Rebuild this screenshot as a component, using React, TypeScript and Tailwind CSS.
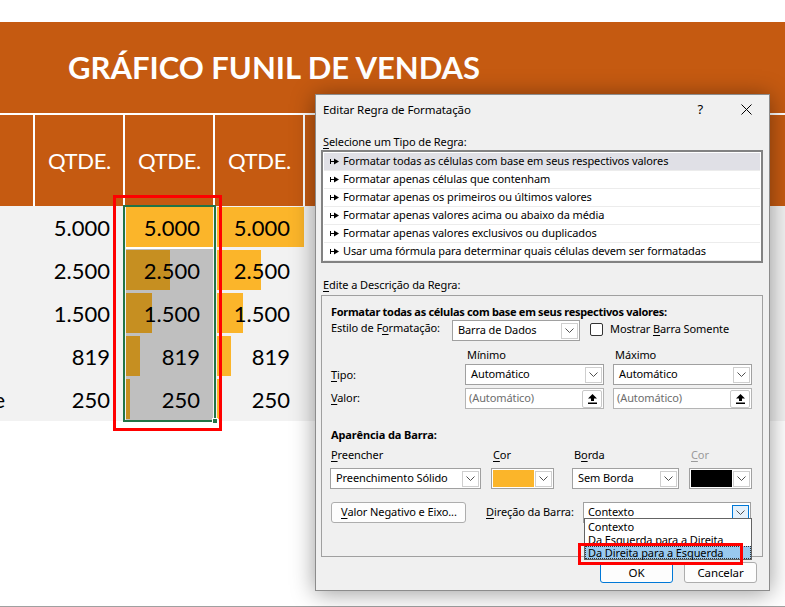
import React from "react";

const rules = [
  "Formatar todas as células com base em seus respectivos valores",
  "Formatar apenas células que contenham",
  "Formatar apenas os primeiros ou últimos valores",
  "Formatar apenas valores acima ou abaixo da média",
  "Formatar apenas valores exclusivos ou duplicados",
  "Usar uma fórmula para determinar quais células devem ser formatadas",
];

const values = [5000, 2500, 1500, 819, 250];
const fmt = (n: number) =>
  n >= 1000 ? `${Math.floor(n / 1000)}.${String(n % 1000).padStart(3, "0")}` : String(n);
const barW = (n: number) => (n / 5000) * 87;

const U = ({ c }: { c: string }) => <span className="underline underline-offset-2">{c}</span>;

function Chevron({ blue }: { blue?: boolean }) {
  return (
    <span
      className={`flex h-[16px] w-[17px] shrink-0 items-center justify-center border ${
        blue ? "border-[#0078d7] bg-[#e5f1fb]" : "border-[#cfcfcf] bg-white"
      }`}
    >
      <svg width="9" height="5" viewBox="0 0 9 5">
        <path d="M0.5 0.5 L4.5 4.5 L8.5 0.5" fill="none" stroke="#505050" strokeWidth="1" />
      </svg>
    </span>
  );
}

function Select({ value, className }: { value: string; className: string }) {
  return (
    <div className={`flex h-[21px] items-center justify-between border border-[#a0a0a0] bg-white pl-[5px] pr-[1px] ${className}`}>
      <span>{value}</span>
      <Chevron />
    </div>
  );
}

function ValueInput() {
  return (
    <div className="flex h-[21px] w-[139px] items-center justify-between border border-[#b4b4b4] bg-white pl-[3px] pr-[1px] text-[#6d6d6d]">
      <span>(Automático)</span>
      <span className="flex h-[18px] w-[20px] items-center justify-center rounded-[2px] border border-[#c8c8c8] bg-white">
        <svg width="9" height="10" viewBox="0 0 9 10">
          <polygon points="4.5,0 9,4.5 6,4.5 6,7 3,7 3,4.5 0,4.5" fill="#000" />
          <rect x="0" y="8.5" width="9" height="1.5" fill="#000" />
        </svg>
      </span>
    </div>
  );
}

function ColorPick({ color }: { color: string }) {
  return (
    <div className="flex h-[21px] w-[63px] items-center border border-[#a0a0a0] bg-white p-[1px]">
      <span className={`h-[17px] w-[42px] ${color}`} />
      <span className="ml-[1px]">
        <Chevron />
      </span>
    </div>
  );
}

function Arrow() {
  return (
    <svg width="9" height="7" viewBox="0 0 9 7" className="mr-[4px] shrink-0">
      <rect x="0" y="1" width="1" height="5" fill="#000" />
      <rect x="0" y="3" width="5" height="1" fill="#000" />
      <polygon points="4,0.5 9,3.5 4,6.5" fill="#000" />
    </svg>
  );
}

function Dialog() {
  return (
    <div className="absolute left-[315px] top-[94px] flex h-[497px] w-[455px] flex-col border border-[#8c8c8c] bg-[#f0f0f0] font-['Noto_Sans',sans-serif] text-[11px] tracking-[-0.1px] text-black shadow-[0_2px_22px_rgba(0,0,0,0.4)]">
      <div className="flex h-[29px] items-center pl-[7px] text-[11.5px]">
        <span className="flex-1">Editar Regra de Formatação</span>
        <span className="mr-[38px] text-[13px]">?</span>
        <svg width="11" height="11" viewBox="0 0 11 11" className="mr-[17px]">
          <path d="M0.5 0.5 L10.5 10.5 M10.5 0.5 L0.5 10.5" stroke="#000" strokeWidth="1" />
        </svg>
      </div>
      <div className="relative flex flex-col px-[5px]">
        <div className="mt-[10px] h-[16px] leading-[16px] pl-[2px]">
          <U c="S" />elecione um Tipo de Regra:
        </div>
        <div className="h-[113px] w-[442px] border-2 border-[#828282] bg-white p-[1px]">
          {rules.map((r, i) => (
            <div
              key={r}
              className={`flex h-[18px] items-center border-b border-[#ececec] pl-[6px] ${i === 0 ? "bg-[#e0e0e6]" : ""}`}
            >
              <Arrow />
              <span>{r}</span>
            </div>
          ))}
        </div>
        <div className="mt-[14px] h-[16px] leading-[16px] pl-[2px]">
          <U c="E" />dite a Descrição da Regra:
        </div>
        <div className="relative mt-[2px] h-[262px] w-[442px] border border-[#a0a0a0] pl-[9px] pt-[8px]">
          <div className="h-[16px] font-bold leading-[16px] tracking-[-0.3px]">
            Formatar todas as células com base em seus respectivos valores:
          </div>
          <div className="flex h-[21px] items-start">
            <span className="w-[121px] leading-[16px]">
              Estilo de F<U c="o" />rmatação:
            </span>
            <Select value="Barra de Dados" className="w-[128px]" />
            <span className="ml-[10px] mt-[3px] h-[13px] w-[13px] rounded-[2px] border border-[#333] bg-white" />
            <span className="ml-[7px] mt-[1px] leading-[16px]">
              Mostrar <U c="B" />arra Somente
            </span>
          </div>
          <div className="mt-[6px] flex h-[16px] leading-[16px]">
            <span className="ml-[136px] w-[148px]">Mínimo</span>
            <span>Máximo</span>
          </div>
          <div className="mt-[1px] flex h-[21px] items-center">
            <span className="w-[134px] pt-[2px]">
              <U c="T" />ipo:
            </span>
            <Select value="Automático" className="w-[139px]" />
            <Select value="Automático" className="ml-[9px] w-[139px]" />
          </div>
          <div className="mt-[3px] flex h-[21px] items-center">
            <span className="w-[134px]">
              <U c="V" />alor:
            </span>
            <ValueInput />
            <span className="ml-[9px]">
              <ValueInput />
            </span>
          </div>
          <div className="mt-[18px] h-[16px] font-bold leading-[16px]">Aparência da Barra:</div>
          <div className="mt-[4px] flex h-[16px] leading-[16px]">
            <span className="w-[162px]">
              <U c="P" />reencher
            </span>
            <span className="w-[81px]">
              <U c="C" />or
            </span>
            <span className="w-[117px]">
              B<U c="o" />rda
            </span>
            <span className="text-[#9a9a9a]">
              <U c="C" />or
            </span>
          </div>
          <div className="mt-[5px] flex h-[21px] items-center">
            <Select value="Preenchimento Sólido" className="-ml-[1px] w-[151px]" />
            <span className="ml-[10px]">
              <ColorPick color="bg-[#fbb52a]" />
            </span>
            <Select value="Sem Borda" className="ml-[18px] w-[107px]" />
            <span className="ml-[10px]">
              <ColorPick color="bg-black" />
            </span>
          </div>
          <div className="mt-[13px] flex h-[21px] items-center">
            <button className="flex h-[21px] w-[135px] items-center rounded-[3px] border border-[#adadad] bg-[#fdfdfd] pl-[9px]">
              <U c="V" />alor Negativo e Eixo...
            </button>
            <span className="ml-[20px] w-[97px]">
              <U c="D" />ireção da Barra:
            </span>
            <div className="flex h-[21px] w-[168px] items-center justify-between border border-[#a0a0a0] bg-white pl-[4px] pr-[1px]">
              <span>Contexto</span>
              <Chevron blue />
            </div>
          </div>
          <div className="absolute left-[262px] top-[222px] flex h-[42px] w-[168px] flex-col border border-[#646464] bg-white pt-[1px] leading-[13px]">
            <span className="h-[13px] pl-[3px]">Contexto</span>
            <span className="h-[13px] pl-[3px]">Da Esquerda para a Direita</span>
            <span className="h-[13px] border border-dotted border-[#333] bg-[#99c9ef] pl-[2px] leading-[11px]">
              Da Direita para a Esquerda
            </span>
          </div>
        </div>
        <div className="absolute left-[262px] top-[419px] h-[22px] w-[165px] border-[3px] border-[#ff0000]" />
        <div className="mt-[5px] flex justify-end pr-[7px]">
          <button className="h-[21px] w-[73px] rounded-[3px] border border-[#0078d7] bg-[#fdfdfd] text-[11.5px]">OK</button>
          <button className="ml-[11px] h-[21px] w-[73px] rounded-[3px] border border-[#adadad] bg-[#fdfdfd] text-[11.5px]">
            Cancelar
          </button>
        </div>
      </div>
    </div>
  );
}

export default function App() {
  return (
    <div className="relative flex h-[607px] w-[785px] flex-col overflow-hidden bg-white font-['Lato',sans-serif]">
      <div className="h-[22px]" />
      <div className="flex h-[91px] items-center bg-[#c55a11] pl-[68px]">
        <h1 className="text-[31px] font-bold text-white">GRÁFICO FUNIL DE VENDAS</h1>
      </div>
      <div className="flex h-[93px] border-t-2 border-white bg-[#c55a11]">
        <div className="w-[35px] border-r-2 border-white" />
        {[0, 1, 2].map((i) => (
          <div key={i} className="flex w-[90px] items-center justify-end border-r-2 border-white pr-[12px] text-[22px] tracking-[-0.3px] text-white">
            QTDE.
          </div>
        ))}
        <div className="flex-1" />
      </div>
      <div className="bg-[#f2f2f2] text-[22px] text-black">
        {values.map((v, i) => (
          <div key={v} className="flex h-[43px]">
            <div className="flex w-[35px] items-center justify-end overflow-hidden whitespace-nowrap pr-[30px]">
              {i === 4 ? "Cliente" : ""}
            </div>
            <div className="flex w-[90px] items-center justify-end pr-[15px]">{fmt(v)}</div>
            <div className="w-[90px] pl-[1px]">
              <div className={`relative flex h-full w-[87px] items-center justify-end pr-[13px] ${i === 0 ? "bg-white" : "bg-[#bfbfbf]"}`}>
                <div
                  className={`absolute left-0 top-[1px] h-[40px] ${i === 0 ? "bg-[#fbb52a]" : "bg-[#c68f21]"}`}
                  style={{ width: barW(v) }}
                />
                <span className="relative">{fmt(v)}</span>
              </div>
            </div>
            <div className="w-[90px] pl-[2px]">
              <div className="relative flex h-full w-[87px] items-center justify-end pr-[14px]">
                <div className="absolute left-0 top-[1px] h-[40px] bg-[#fbb52a]" style={{ width: barW(v) }} />
                <span className="relative">{fmt(v)}</span>
              </div>
            </div>
          </div>
        ))}
      </div>
      <div className="flex-1" />
      <div className="h-px bg-[#a0a0a0]" />

      <div className="absolute left-[123px] top-[205px] h-[217px] w-[93px] border-2 border-[#217346]" />
      <div className="absolute left-[212px] top-[418px] h-[6px] w-[6px] border border-white bg-[#217346]" />
      <div className="absolute left-[113px] top-[195px] h-[236px] w-[109px] border-[3px] border-[#ff0000]" />

      <Dialog />
    </div>
  );
}
